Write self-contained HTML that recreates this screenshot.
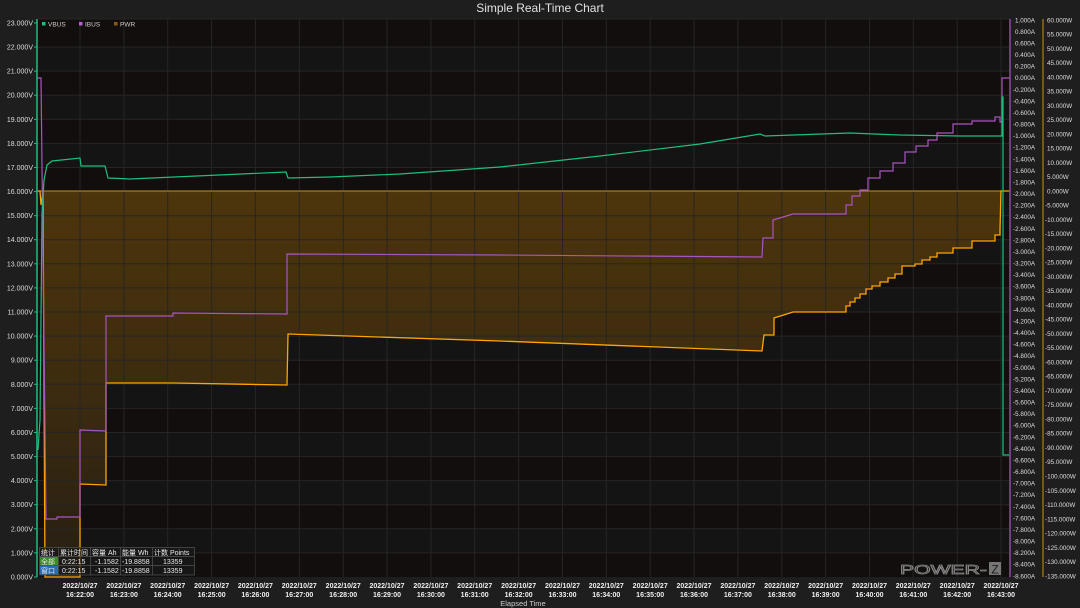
<!DOCTYPE html>
<html><head><meta charset="utf-8"><style>
html,body{margin:0;padding:0;background:#1e1e1e;width:1080px;height:608px;overflow:hidden}
svg{display:block;font-family:"Liberation Sans","Noto Sans CJK SC",sans-serif}
</style></head><body>
<svg width="1080" height="608" viewBox="0 0 1080 608" xmlns="http://www.w3.org/2000/svg">
<defs>
<linearGradient id="fg" x1="0" y1="191" x2="0" y2="577" gradientUnits="userSpaceOnUse">
<stop offset="0" stop-color="#50370c"/><stop offset="0.5" stop-color="#3f2d0f"/><stop offset="1" stop-color="#282014"/>
</linearGradient>
</defs>
<rect width="1080" height="608" fill="#1e1e1e"/>
<text x="540" y="12" fill="#e0e0e0" font-size="12" text-anchor="middle">Simple Real-Time Chart</text>
<rect x="37" y="19" width="973" height="558" fill="#120e0e"/>
<g fill="#141414">
<rect x="37" y="47" width="973" height="24.1"/><rect x="37" y="95.2" width="973" height="24.1"/><rect x="37" y="143.4" width="973" height="24.1"/><rect x="37" y="191.6" width="973" height="24.1"/><rect x="37" y="239.7" width="973" height="24.1"/><rect x="37" y="287.9" width="973" height="24.1"/><rect x="37" y="336.1" width="973" height="24.1"/><rect x="37" y="384.3" width="973" height="24.1"/><rect x="37" y="432.5" width="973" height="24.1"/><rect x="37" y="480.6" width="973" height="24.1"/><rect x="37" y="528.8" width="973" height="24.1"/>
</g>
<path d="M40,191 L43,191 L45,577 L80,577 L80,484 L106,484 L106,383 L173,383 L287,384 L288,334 L500,341 L762,351 L764,335 L774,335 L774,318 L793,312 H846 V306 H850 V302 H855 V298 H860 V294 H866 V289 H872 V286 H880 V282 H888 V278 H895 V274 H902 V266 H915 V264 H922 V260 H930 V257 H937 V253 H953 V248 H972 V241 H995 V235 H1000 V229 L1001,191 Z" fill="url(#fg)" opacity="0.95"/>
<g stroke="#272523" stroke-width="1">
<line x1="37" x2="1010" y1="552.9" y2="552.9"/><line x1="37" x2="1010" y1="528.8" y2="528.8"/><line x1="37" x2="1010" y1="504.7" y2="504.7"/><line x1="37" x2="1010" y1="480.6" y2="480.6"/><line x1="37" x2="1010" y1="456.6" y2="456.6"/><line x1="37" x2="1010" y1="432.5" y2="432.5"/><line x1="37" x2="1010" y1="408.4" y2="408.4"/><line x1="37" x2="1010" y1="384.3" y2="384.3"/><line x1="37" x2="1010" y1="360.2" y2="360.2"/><line x1="37" x2="1010" y1="336.1" y2="336.1"/><line x1="37" x2="1010" y1="312" y2="312"/><line x1="37" x2="1010" y1="287.9" y2="287.9"/><line x1="37" x2="1010" y1="263.8" y2="263.8"/><line x1="37" x2="1010" y1="239.7" y2="239.7"/><line x1="37" x2="1010" y1="215.7" y2="215.7"/><line x1="37" x2="1010" y1="167.5" y2="167.5"/><line x1="37" x2="1010" y1="143.4" y2="143.4"/><line x1="37" x2="1010" y1="119.3" y2="119.3"/><line x1="37" x2="1010" y1="95.2" y2="95.2"/><line x1="37" x2="1010" y1="71.1" y2="71.1"/><line x1="37" x2="1010" y1="47" y2="47"/><line x1="37" x2="1010" y1="19" y2="19"/>
<line x1="80" x2="80" y1="19" y2="577"/><line x1="123.9" x2="123.9" y1="19" y2="577"/><line x1="167.7" x2="167.7" y1="19" y2="577"/><line x1="211.6" x2="211.6" y1="19" y2="577"/><line x1="255.4" x2="255.4" y1="19" y2="577"/><line x1="299.3" x2="299.3" y1="19" y2="577"/><line x1="343.2" x2="343.2" y1="19" y2="577"/><line x1="387" x2="387" y1="19" y2="577"/><line x1="430.9" x2="430.9" y1="19" y2="577"/><line x1="474.7" x2="474.7" y1="19" y2="577"/><line x1="518.6" x2="518.6" y1="19" y2="577"/><line x1="562.5" x2="562.5" y1="19" y2="577"/><line x1="606.3" x2="606.3" y1="19" y2="577"/><line x1="650.2" x2="650.2" y1="19" y2="577"/><line x1="694" x2="694" y1="19" y2="577"/><line x1="737.9" x2="737.9" y1="19" y2="577"/><line x1="781.8" x2="781.8" y1="19" y2="577"/><line x1="825.6" x2="825.6" y1="19" y2="577"/><line x1="869.5" x2="869.5" y1="19" y2="577"/><line x1="913.3" x2="913.3" y1="19" y2="577"/><line x1="957.2" x2="957.2" y1="19" y2="577"/><line x1="1001" x2="1001" y1="19" y2="577"/>
</g>
<line x1="37" x2="1010" y1="191" y2="191" stroke="#c8901c" stroke-width="1"/>
<path fill="none" stroke="#ffa500" stroke-width="1.3" d="M37,191 L40,191 L41,205 L43,191 L45,577 L80,577 L80,484 L106,485 L106,383 L173,383 L287,385 L288,334 L500,341 L762,351 L764,335 L774,335 L774,318 L793,312 H846 V306 H850 V302 H855 V298 H860 V294 H866 V289 H872 V286 H880 V282 H888 V278 H895 V274 H902 V266 H915 V264 H922 V260 H930 V257 H937 V253 H953 V248 H972 V241 H995 V235 H1000 V229 L1001,191 H1010"/>
<path fill="none" stroke="#a855c0" stroke-width="1.2" d="M37,78 L40,78 L41,78 L46,519 L57,519 L57,517 L80,517 L80,430 L106,431 L106,316 L173,316 L173,313 L287,314 L287,254 L500,255 L762,257 L763,238 H773 V220 L793,214 H846 V205 H852 V196 H860 V190 H868 V178 H880 V171 H893 V163 H905 V152 H916 V146 H928 V140 H937 V133 H953 V124 H972 V121 H995 V117 H1000 V122 H1002 V78 H1010"/>
<polyline fill="none" stroke="#1dbf7e" stroke-width="1.2" points="38,450 40,420 42,214 44,180 47,165 52,161 80,158 81,166 105,166 108,178 130,179 286,172 288,178 330,177 400,174 500,167 600,156 700,144 760,134 765,136 850,133 900,135 960,136 1001,136 1002,136 1002,97 1003,97 1003,455 1010,455"/>
<line x1="37" x2="37" y1="19" y2="577" stroke="#1dbf7e" stroke-width="1.5"/>
<line x1="1010" x2="1010" y1="19" y2="577" stroke="#8e4aa8" stroke-width="1.5"/>
<line x1="1043" x2="1043" y1="19" y2="577" stroke="#c8901c" stroke-width="1"/>
<rect x="42" y="22" width="3.5" height="3.5" fill="#1dbf7e"/><text x="48" y="26.5" fill="#ccc" font-size="6.5">VBUS</text>
<rect x="79" y="22" width="3.5" height="3.5" fill="#b55fd0"/><text x="85" y="26.5" fill="#ccc" font-size="6.5">IBUS</text>
<rect x="114" y="22" width="3.5" height="3.5" fill="#8a5a10"/><text x="120" y="26.5" fill="#ccc" font-size="6.5">PWR</text>
<g fill="#ddd" font-size="7" text-anchor="end">
<text x="33" y="579.5">0.000V</text><text x="33" y="555.4">1.000V</text><text x="33" y="531.3">2.000V</text><text x="33" y="507.2">3.000V</text><text x="33" y="483.1">4.000V</text><text x="33" y="459.1">5.000V</text><text x="33" y="435">6.000V</text><text x="33" y="410.9">7.000V</text><text x="33" y="386.8">8.000V</text><text x="33" y="362.7">9.000V</text><text x="33" y="338.6">10.000V</text><text x="33" y="314.5">11.000V</text><text x="33" y="290.4">12.000V</text><text x="33" y="266.3">13.000V</text><text x="33" y="242.2">14.000V</text><text x="33" y="218.2">15.000V</text><text x="33" y="194.1">16.000V</text><text x="33" y="170">17.000V</text><text x="33" y="145.9">18.000V</text><text x="33" y="121.8">19.000V</text><text x="33" y="97.7">20.000V</text><text x="33" y="73.6">21.000V</text><text x="33" y="49.5">22.000V</text><text x="33" y="25.4">23.000V</text>
</g>
<g stroke="#1dbf7e" stroke-width="1">
<line x1="34" x2="37" y1="577" y2="577"/><line x1="34" x2="37" y1="552.9" y2="552.9"/><line x1="34" x2="37" y1="528.8" y2="528.8"/><line x1="34" x2="37" y1="504.7" y2="504.7"/><line x1="34" x2="37" y1="480.6" y2="480.6"/><line x1="34" x2="37" y1="456.6" y2="456.6"/><line x1="34" x2="37" y1="432.5" y2="432.5"/><line x1="34" x2="37" y1="408.4" y2="408.4"/><line x1="34" x2="37" y1="384.3" y2="384.3"/><line x1="34" x2="37" y1="360.2" y2="360.2"/><line x1="34" x2="37" y1="336.1" y2="336.1"/><line x1="34" x2="37" y1="312" y2="312"/><line x1="34" x2="37" y1="287.9" y2="287.9"/><line x1="34" x2="37" y1="263.8" y2="263.8"/><line x1="34" x2="37" y1="239.7" y2="239.7"/><line x1="34" x2="37" y1="215.7" y2="215.7"/><line x1="34" x2="37" y1="191.6" y2="191.6"/><line x1="34" x2="37" y1="167.5" y2="167.5"/><line x1="34" x2="37" y1="143.4" y2="143.4"/><line x1="34" x2="37" y1="119.3" y2="119.3"/><line x1="34" x2="37" y1="95.2" y2="95.2"/><line x1="34" x2="37" y1="71.1" y2="71.1"/><line x1="34" x2="37" y1="47" y2="47"/><line x1="34" x2="37" y1="22.9" y2="22.9"/>
</g>
<g fill="#ddd" font-size="6.3">
<text x="1015" y="22.3">1.000A</text><text x="1015" y="33.9">0.800A</text><text x="1015" y="45.5">0.600A</text><text x="1015" y="57">0.400A</text><text x="1015" y="68.6">0.200A</text><text x="1015" y="80.2">0.000A</text><text x="1013" y="91.8">-0.200A</text><text x="1013" y="103.4">-0.400A</text><text x="1013" y="115">-0.600A</text><text x="1013" y="126.5">-0.800A</text><text x="1013" y="138.1">-1.000A</text><text x="1013" y="149.7">-1.200A</text><text x="1013" y="161.3">-1.400A</text><text x="1013" y="172.9">-1.600A</text><text x="1013" y="184.5">-1.800A</text><text x="1013" y="196">-2.000A</text><text x="1013" y="207.6">-2.200A</text><text x="1013" y="219.2">-2.400A</text><text x="1013" y="230.8">-2.600A</text><text x="1013" y="242.4">-2.800A</text><text x="1013" y="254">-3.000A</text><text x="1013" y="265.5">-3.200A</text><text x="1013" y="277.1">-3.400A</text><text x="1013" y="288.7">-3.600A</text><text x="1013" y="300.3">-3.800A</text><text x="1013" y="311.9">-4.000A</text><text x="1013" y="323.5">-4.200A</text><text x="1013" y="335">-4.400A</text><text x="1013" y="346.6">-4.600A</text><text x="1013" y="358.2">-4.800A</text><text x="1013" y="369.8">-5.000A</text><text x="1013" y="381.4">-5.200A</text><text x="1013" y="393">-5.400A</text><text x="1013" y="404.5">-5.600A</text><text x="1013" y="416.1">-5.800A</text><text x="1013" y="427.7">-6.000A</text><text x="1013" y="439.3">-6.200A</text><text x="1013" y="450.9">-6.400A</text><text x="1013" y="462.5">-6.600A</text><text x="1013" y="474">-6.800A</text><text x="1013" y="485.6">-7.000A</text><text x="1013" y="497.2">-7.200A</text><text x="1013" y="508.8">-7.400A</text><text x="1013" y="520.4">-7.600A</text><text x="1013" y="532">-7.800A</text><text x="1013" y="543.5">-8.000A</text><text x="1013" y="555.1">-8.200A</text><text x="1013" y="566.7">-8.400A</text><text x="1013" y="578.3">-8.600A</text>
</g>
<g fill="#ddd" font-size="6.3">
<text x="1047" y="22.3">60.000W</text><text x="1047" y="36.6">55.000W</text><text x="1047" y="50.8">50.000W</text><text x="1047" y="65.1">45.000W</text><text x="1047" y="79.3">40.000W</text><text x="1047" y="93.6">35.000W</text><text x="1047" y="107.8">30.000W</text><text x="1047" y="122.1">25.000W</text><text x="1047" y="136.3">20.000W</text><text x="1047" y="150.6">15.000W</text><text x="1047" y="164.9">10.000W</text><text x="1047" y="179.1">5.000W</text><text x="1047" y="193.4">0.000W</text><text x="1045" y="207.6">-5.000W</text><text x="1045" y="221.9">-10.000W</text><text x="1045" y="236.1">-15.000W</text><text x="1045" y="250.4">-20.000W</text><text x="1045" y="264.7">-25.000W</text><text x="1045" y="278.9">-30.000W</text><text x="1045" y="293.2">-35.000W</text><text x="1045" y="307.4">-40.000W</text><text x="1045" y="321.7">-45.000W</text><text x="1045" y="335.9">-50.000W</text><text x="1045" y="350.2">-55.000W</text><text x="1045" y="364.4">-60.000W</text><text x="1045" y="378.7">-65.000W</text><text x="1045" y="393">-70.000W</text><text x="1045" y="407.2">-75.000W</text><text x="1045" y="421.5">-80.000W</text><text x="1045" y="435.7">-85.000W</text><text x="1045" y="450">-90.000W</text><text x="1045" y="464.2">-95.000W</text><text x="1045" y="478.5">-100.000W</text><text x="1045" y="492.8">-105.000W</text><text x="1045" y="507">-110.000W</text><text x="1045" y="521.3">-115.000W</text><text x="1045" y="535.5">-120.000W</text><text x="1045" y="549.8">-125.000W</text><text x="1045" y="564">-130.000W</text><text x="1045" y="578.3">-135.000W</text>
</g>
<g fill="#eee" font-size="7" font-weight="bold" text-anchor="middle">
<text x="80" y="588">2022/10/27</text><text x="80" y="597">16:22:00</text>
<text x="123.9" y="588">2022/10/27</text><text x="123.9" y="597">16:23:00</text>
<text x="167.7" y="588">2022/10/27</text><text x="167.7" y="597">16:24:00</text>
<text x="211.6" y="588">2022/10/27</text><text x="211.6" y="597">16:25:00</text>
<text x="255.4" y="588">2022/10/27</text><text x="255.4" y="597">16:26:00</text>
<text x="299.3" y="588">2022/10/27</text><text x="299.3" y="597">16:27:00</text>
<text x="343.2" y="588">2022/10/27</text><text x="343.2" y="597">16:28:00</text>
<text x="387" y="588">2022/10/27</text><text x="387" y="597">16:29:00</text>
<text x="430.9" y="588">2022/10/27</text><text x="430.9" y="597">16:30:00</text>
<text x="474.7" y="588">2022/10/27</text><text x="474.7" y="597">16:31:00</text>
<text x="518.6" y="588">2022/10/27</text><text x="518.6" y="597">16:32:00</text>
<text x="562.5" y="588">2022/10/27</text><text x="562.5" y="597">16:33:00</text>
<text x="606.3" y="588">2022/10/27</text><text x="606.3" y="597">16:34:00</text>
<text x="650.2" y="588">2022/10/27</text><text x="650.2" y="597">16:35:00</text>
<text x="694" y="588">2022/10/27</text><text x="694" y="597">16:36:00</text>
<text x="737.9" y="588">2022/10/27</text><text x="737.9" y="597">16:37:00</text>
<text x="781.8" y="588">2022/10/27</text><text x="781.8" y="597">16:38:00</text>
<text x="825.6" y="588">2022/10/27</text><text x="825.6" y="597">16:39:00</text>
<text x="869.5" y="588">2022/10/27</text><text x="869.5" y="597">16:40:00</text>
<text x="913.3" y="588">2022/10/27</text><text x="913.3" y="597">16:41:00</text>
<text x="957.2" y="588">2022/10/27</text><text x="957.2" y="597">16:42:00</text>
<text x="1001" y="588">2022/10/27</text><text x="1001" y="597">16:43:00</text>
</g>
<text x="523" y="606" fill="#ccc" font-size="7.5" text-anchor="middle">Elapsed Time</text>
<g font-size="7" fill="#e8e8e8">
<rect x="39" y="547" width="155" height="28" fill="#1a1a1a" opacity="0.7"/>
<rect x="40" y="557" width="18" height="8.5" fill="#3f8a2a"/>
<rect x="40" y="566" width="18" height="8.5" fill="#2a6db0"/>
<g stroke="#555" stroke-width="0.7" fill="none">
<rect x="39.5" y="547.5" width="155" height="27.5"/>
<line x1="39.5" x2="194.5" y1="556.5" y2="556.5"/><line x1="39.5" x2="194.5" y1="565.5" y2="565.5"/>
<line x1="58.5" x2="58.5" y1="547.5" y2="575"/><line x1="90.5" x2="90.5" y1="547.5" y2="575"/><line x1="120.5" x2="120.5" y1="547.5" y2="575"/><line x1="152.5" x2="152.5" y1="547.5" y2="575"/>
</g>
<text x="41" y="555">统计</text><text x="60" y="555">累计时间</text><text x="92" y="555">容量 Ah</text><text x="122" y="555">能量 Wh</text><text x="154" y="555">计数 Points</text>
<text x="41" y="564">全部</text><text x="62" y="564">0:22:15</text><text x="95" y="564">-1.1582</text><text x="122" y="564">-19.8858</text><text x="163" y="564">13359</text>
<text x="41" y="573">窗口</text><text x="62" y="573">0:22:15</text><text x="95" y="573">-1.1582</text><text x="122" y="573">-19.8858</text><text x="163" y="573">13359</text>
</g>
<text x="900" y="574" fill="none" stroke="#888" stroke-width="0.8" font-size="13" textLength="87" lengthAdjust="spacingAndGlyphs" font-family="Liberation Sans, sans-serif">POWER-</text>
<rect x="989" y="562" width="12" height="13" fill="#777"/>
<text x="995" y="573.5" fill="#1e1e1e" font-size="12" text-anchor="middle">Z</text>
</svg>
</body></html>
